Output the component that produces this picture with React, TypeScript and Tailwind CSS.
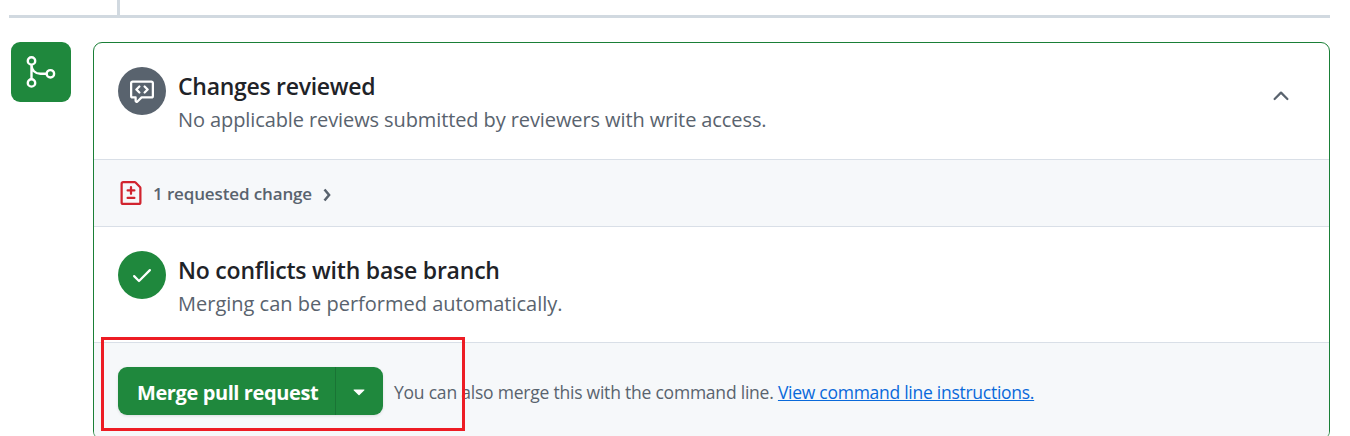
import type { ReactNode } from "react";

const paths = {
  codeReview:
    "M1.75 1h12.5c.966 0 1.75.784 1.75 1.75v8.5A1.75 1.75 0 0 1 14.25 13H8.061l-2.574 2.573A1.458 1.458 0 0 1 3 14.543V13H1.75A1.75 1.75 0 0 1 0 11.25v-8.5C0 1.784.784 1 1.75 1ZM1.5 2.75v8.5c0 .138.112.25.25.25h2a.75.75 0 0 1 .75.75v2.19l2.72-2.72a.749.749 0 0 1 .53-.22h6.5a.25.25 0 0 0 .25-.25v-8.5a.25.25 0 0 0-.25-.25H1.75a.25.25 0 0 0-.25.25Zm5.28 1.72a.75.75 0 0 1 0 1.06L5.31 7l1.47 1.47a.751.751 0 0 1-.018 1.042.751.751 0 0 1-1.042.018l-2-2a.75.75 0 0 1 0-1.06l2-2a.75.75 0 0 1 1.06 0Zm2.44 0a.75.75 0 0 1 1.06 0l2 2a.75.75 0 0 1 0 1.06l-2 2a.751.751 0 0 1-1.042-.018.751.751 0 0 1-.018-1.042L10.69 7 9.22 5.53a.75.75 0 0 1 0-1.06Z",
  fileDiff:
    "M1 1.75C1 .784 1.784 0 2.75 0h7.586c.464 0 .909.184 1.237.513l2.914 2.914c.329.328.513.773.513 1.237v9.586A1.75 1.75 0 0 1 13.25 16H2.75A1.75 1.75 0 0 1 1 14.25Zm1.75-.25a.25.25 0 0 0-.25.25v12.5c0 .138.112.25.25.25h10.5a.25.25 0 0 0 .25-.25V4.664a.25.25 0 0 0-.073-.177l-2.914-2.914a.25.25 0 0 0-.177-.073ZM8 3.25a.75.75 0 0 1 .75.75v1.5h1.5a.75.75 0 0 1 0 1.5h-1.5v1.5a.75.75 0 0 1-1.5 0V7h-1.5a.75.75 0 0 1 0-1.5h1.5V4A.75.75 0 0 1 8 3.25Zm-3 8a.75.75 0 0 1 .75-.75h4.5a.75.75 0 0 1 0 1.5h-4.5a.75.75 0 0 1-.75-.75Z",
  check:
    "M13.78 4.22a.75.75 0 0 1 0 1.06l-7.25 7.25a.75.75 0 0 1-1.06 0L2.22 9.28a.751.751 0 0 1 .018-1.042.751.751 0 0 1 1.042-.018L6 10.94l6.72-6.72a.75.75 0 0 1 1.06 0Z",
  chevronUp:
    "M3.22 10.53a.749.749 0 0 1 0-1.06l4.25-4.25a.749.749 0 0 1 1.06 0l4.25 4.25a.749.749 0 1 1-1.06 1.06L8 6.811 4.28 10.53a.749.749 0 0 1-1.06 0Z",
  triangleDown:
    "m4.427 7.427 3.396 3.396a.25.25 0 0 0 .354 0l3.396-3.396A.25.25 0 0 0 11.396 7H4.604a.25.25 0 0 0-.177.427Z",
};

function Icon({ name, className = "size-6" }: { name: keyof typeof paths; className?: string }) {
  return (
    <svg viewBox="0 0 16 16" fill="currentColor" className={`shrink-0 ${className}`} aria-hidden="true">
      <path d={paths[name]} />
    </svg>
  );
}

function MergeIcon() {
  return (
    <svg viewBox="0 0 36 36" fill="none" stroke="currentColor" strokeWidth="2.4" className="size-9" aria-hidden="true">
      <circle cx="8.5" cy="6.9" r="3.7" />
      <circle cx="8.5" cy="28.9" r="3.7" />
      <circle cx="27.4" cy="19.8" r="3.7" />
      <path d="M8.5 10.6v14.6M8.5 11c0 5 3.5 8.8 9 8.8h6.2" />
    </svg>
  );
}

function Badge({ className, children }: { className: string; children: ReactNode }) {
  return (
    <div className={`flex size-12 shrink-0 items-center justify-center rounded-full text-white ${className}`}>
      {children}
    </div>
  );
}

export default function App() {
  return (
    <div className="h-[436px] w-[1350px] overflow-hidden bg-white pl-[9px] font-['Open_Sans','Noto_Sans',sans-serif] text-[#59636e]">
      <div className="ml-[108px] h-[15px] w-[3px] bg-[#d1d9e0]" />
      <div className="h-[3px] w-[1321px] bg-[#d1d9e0]" />

      <div className="mt-6 flex items-start pl-0.5">
        <div className="flex size-[60px] shrink-0 items-center justify-center rounded-[9px] bg-[#1f883d] text-white">
          <MergeIcon />
        </div>

        <section className="ml-[22px] h-[398px] w-[1237px] overflow-hidden rounded-[9px] border border-[#1a7f37]">
          <div className="flex h-[117px] items-start border-b border-[#d9dfe7] pt-6 pl-6">
            <Badge className="bg-[#59636e]">
              <Icon name="codeReview" />
            </Badge>
            <div className="ml-3 grow pt-[3px] whitespace-nowrap">
              <h3 className="text-[23px] leading-8 font-semibold tracking-[-0.28px] text-[#1f2328]">Changes reviewed</h3>
              <p className="text-[20px] leading-9 tracking-[-0.1px]">
                No applicable reviews submitted by reviewers with write access.
              </p>
            </div>
            <button type="button" className="mt-[17px] mr-9" aria-label="Collapse">
              <Icon name="chevronUp" />
            </button>
          </div>

          <div className="flex h-[67px] items-center border-b border-[#d9dfe7] bg-[#f6f8fa] pl-[25px]">
            <Icon name="fileDiff" className="size-6 text-[#d1242f]" />
            <span className="ml-2.5 pt-0.5 text-[17px] font-semibold tracking-[-0.13px] whitespace-nowrap">
              1 requested change
            </span>
            <svg
              viewBox="0 0 8 14"
              fill="none"
              stroke="currentColor"
              strokeWidth="2.5"
              className="mt-1 ml-[11px] h-3.5 w-2 shrink-0"
              aria-hidden="true"
            >
              <path d="m1.5 1.5 4.6 5.5-4.6 5.5" />
            </svg>
          </div>

          <div className="flex h-[116px] items-start border-b border-[#d9dfe7] pt-6 pl-6">
            <Badge className="bg-[#1f883d]">
              <Icon name="check" />
            </Badge>
            <div className="ml-3 pt-[3px] whitespace-nowrap">
              <h3 className="text-[23px] leading-8 font-semibold tracking-[-0.22px] text-[#1f2328]">
                No conflicts with base branch
              </h3>
              <p className="text-[20px] leading-9">Merging can be performed automatically.</p>
            </div>
          </div>

          <div className="relative flex h-[120px] items-start bg-[#f6f8fa] pt-6 pl-6 whitespace-nowrap">
            <div className="flex h-12 w-[265px] shrink-0 overflow-hidden rounded-[9px] bg-[#1f883d] text-white shadow-[0_1px_3px_rgba(31,35,40,0.12)]">
              <button
                type="button"
                className="w-[218px] border-r border-[#1a7435] pt-1 pl-[19px] text-left text-[20px] font-bold tracking-[-0.4px]"
              >
                Merge pull request
              </button>
              <button type="button" className="flex w-[47px] items-center pl-[11px]" aria-label="Select merge method">
                <Icon name="triangleDown" />
              </button>
            </div>
            <p className="ml-[11px] text-[17.5px] leading-[50px]">
              <span className="tracking-[-0.22px]">You can also merge this with the command line. </span>
              <a href="#" className="tracking-[-0.27px] text-[#0969da] underline">
                View command line instructions.
              </a>
            </p>
            <div className="pointer-events-none absolute top-[-6px] left-[7px] h-[94px] w-[364px] border-3 border-[#ed1c24]" />
          </div>
        </section>
      </div>
    </div>
  );
}
